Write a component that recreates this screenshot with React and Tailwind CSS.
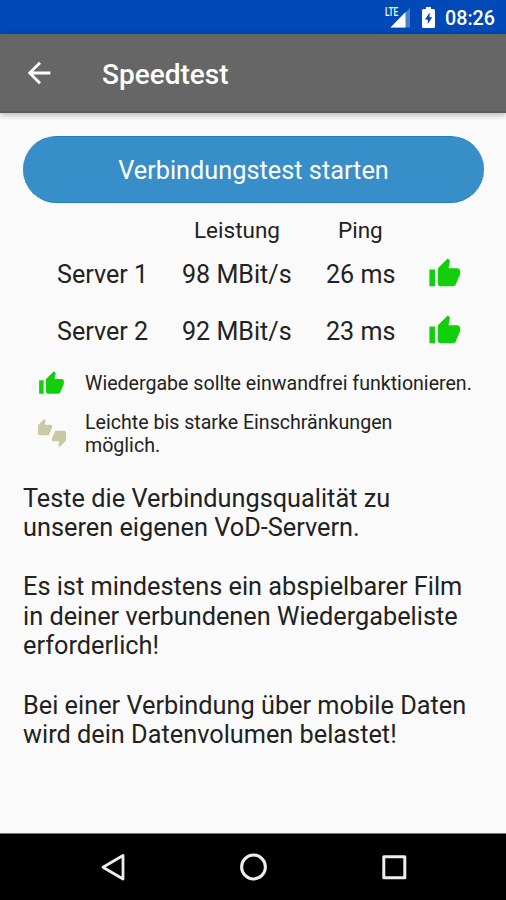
import React from "react";

const THUMB_UP =
  "M1 21h4V9H1v12zm22-11c0-1.1-.9-2-2-2h-6.31l.95-4.57.03-.32c0-.41-.17-.79-.44-1.06L14.17 1 7.59 7.59C7.22 7.95 7 8.45 7 9v10c0 1.1.9 2 2 2h9c.83 0 1.54-.5 1.84-1.22l3.02-7.05c.09-.23.14-.47.14-.73v-2z";

function ThumbUp({ className }) {
  return (
    <svg viewBox="0 0 24 24" className={className} fill="#12cf0c">
      <path d={THUMB_UP} />
    </svg>
  );
}

function ThumbsUpDown({ className }) {
  return (
    <svg viewBox="0 0 24 24" className={className} fill="#cbc8a4">
      <path d="M12 6c0-.55-.45-1-1-1H5.82l.66-3.18.02-.23c0-.31-.13-.59-.33-.8L5.38 0 .44 4.94C.17 5.21 0 5.59 0 6v6.5c0 .83.67 1.5 1.5 1.5h6.75c.62 0 1.15-.38 1.38-.91l2.26-5.29c.07-.17.11-.36.11-.55V6zm10.5 4h-6.75c-.62 0-1.15.38-1.38.91l-2.26 5.29c-.07.17-.11.36-.11.55V18c0 .55.45 1 1 1h5.18l-.66 3.18-.02.24c0 .31.13.59.33.8l.79.78 4.94-4.94c.27-.27.44-.65.44-1.06v-6.5c0-.83-.67-1.5-1.5-1.5z" />
    </svg>
  );
}

function StatusBar() {
  return (
    <div className="flex h-[34px] items-start bg-[#0049b6] pl-[384px] text-white">
      <svg width="28" height="34" viewBox="0 0 28 34">
        <path d="M26 8v19.500H6.500z" fill="#fff" fillOpacity="0.3" />
        <path d="M21.500 12V27.500H6.500z" fill="#fff" />
        <text x="1" y="16" fontSize="12.5" fontWeight="500" fontFamily="Roboto, sans-serif" fill="#fff" textLength="13.2" lengthAdjust="spacingAndGlyphs">
          LTE
        </text>
      </svg>
      <svg width="14" height="34" viewBox="0 0 14 34" className="ml-[9px]">
        <path fillRule="evenodd" fill="#fff" d="M5 7h5v2h2.5q1.500 0 1.500 1.500v16q0 1.500-1.500 1.500h-10Q1 28 1 26.500v-16Q1 9 2.500 9H5zM8.600 12.500l-4.600 7h2.800v4.500l4.400-6.800H8.600z" />
      </svg>
      <span className="ml-[10px] mt-[7px] text-[19.7px] leading-[24px] font-medium">08:26</span>
    </div>
  );
}

function AppBar() {
  return (
    <header className="relative flex h-[79px] items-center border-b-2 border-[#5b5b5b] bg-[#666] pl-[22px] text-white shadow-[0_2px_6px_rgba(0,0,0,0.28)]">
      <svg viewBox="0 0 24 24" className="size-[34px]" fill="#fff">
        <path d="M20 11H7.830l5.590-5.590L12 4l-8 8 8 8 1.410-1.410L7.830 13H20v-2z" />
      </svg>
      <h1 className="ml-[46px] mt-[5px] text-[28px] leading-[34px] font-medium">Speedtest</h1>
    </header>
  );
}

function ServerRow({ name, speed, ping }) {
  return (
    <div className="flex h-[56.5px] items-center text-[25.1px]">
      <span className="w-[125px]">{name}</span>
      <span className="w-[144px]">{speed}</span>
      <span className="w-[101.5px]">{ping}</span>
      <ThumbUp className="mb-[3px] size-[33.5px]" />
    </div>
  );
}

export default function App() {
  return (
    <div className="flex h-[900px] w-[506px] flex-col overflow-hidden bg-[#fafafa] font-[Roboto,sans-serif] whitespace-nowrap text-[#222]">
      <StatusBar />
      <AppBar />
      <main className="flex-1">
        <button className="mt-[23px] ml-[23px] flex h-[67px] w-[461px] items-center justify-center rounded-full border-y border-[#1d80bd] bg-[#378ec9] pt-[2px] text-[25.3px] text-white">
          Verbindungstest starten
        </button>
        <div className="mt-[14px] flex h-[28px] items-center text-[22.500px]">
          <span className="ml-[194px] w-[144px]">Leistung</span>
          <span>Ping</span>
        </div>
        <div className="mt-[2px] ml-[57px]">
          <ServerRow name="Server 1" speed="98 MBit/s" ping="26 ms" />
          <ServerRow name="Server 2" speed="92 MBit/s" ping="23 ms" />
        </div>
        <div className="mt-[12px] ml-[38px] flex h-[24px] items-center text-[19.6px]">
          <ThumbUp className="mb-[2px] size-[27px]" />
          <span className="ml-[20px]">Wiedergabe sollte einwandfrei funktionieren.</span>
        </div>
        <div className="mt-[15px] ml-[38px] flex h-[46px] items-center text-[19.6px] leading-[23px]">
          <ThumbsUpDown className="mb-[3px] size-[28px]" />
          <p className="ml-[19px]">
            Leichte bis starke Einschränkungen
            <br />
            möglich.
          </p>
        </div>
        <div className="mt-[26.5px] ml-[23px] space-y-[29.6px] text-[25.3px] leading-[29.6px]">
          <p>
            Teste die Verbindungsqualität zu
            <br />
            unseren eigenen VoD-Servern.
          </p>
          <p>
            Es ist mindestens ein abspielbarer Film
            <br />
            in deiner verbundenen Wiedergabeliste
            <br />
            erforderlich!
          </p>
          <p>
            Bei einer Verbindung über mobile Daten
            <br />
            wird dein Datenvolumen belastet!
          </p>
        </div>
      </main>
      <nav className="flex h-[67px] items-center border-t border-[#777] bg-black pb-[1px] pl-[99px]">
        <svg width="28" height="32" viewBox="0 0 28 32" fill="none" stroke="#eee" strokeWidth="2.8" strokeLinejoin="round">
          <path d="M24 4.500v23.500L4 16.200z" />
        </svg>
        <svg width="32" height="32" viewBox="0 0 32 32" className="ml-[111px]" fill="none" stroke="#eee" strokeWidth="3">
          <circle cx="15.500" cy="16" r="11.900" />
        </svg>
        <svg width="28" height="32" viewBox="0 0 28 32" className="ml-[110px]" fill="none" stroke="#eee" strokeWidth="3" strokeLinejoin="round">
          <rect x="3.800" y="5.800" width="21" height="21" />
        </svg>
      </nav>
    </div>
  );
}
